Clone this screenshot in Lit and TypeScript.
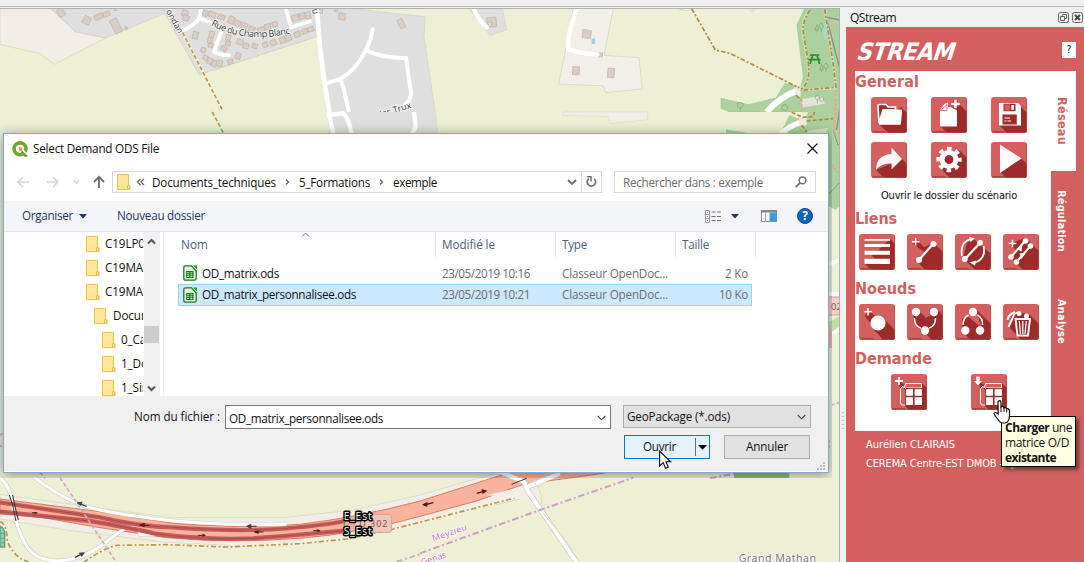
import { LitElement, html, svg, css } from "lit";
import { customElement, property } from "lit/decorators.js";

/** Text that spreads its letter spacing so that it spans `w` pixels. */
@customElement("fit-text")
class FitText extends LitElement {
  @property({ type: Number }) w = 0;
  static styles = css`
    :host { display: inline-block; white-space: pre; flex: none; }
    span { display: inline-block; white-space: pre; }
  `;
  render() {
    return html`<span><slot></slot></span>`;
  }
  firstUpdated() {
    const span = this.renderRoot.querySelector("span") as HTMLElement;
    const box = span.getBoundingClientRect();
    const n = (this.textContent || "").length;
    if (this.w && n) span.style.letterSpacing = (this.w - Math.max(box.width, box.height)) / n + "px";
  }
}

const RED = "#d35f5f";
const DARK = "#9d2b2b";

const plus = (x: number, y: number, r: number, w: number) =>
  svg`<path d="M${x - r} ${y}H${x + r}M${x} ${y - r}V${y + r}" stroke="#fff" stroke-width=${w}/>`;

const tableGlyph = svg`
  <path d="M8 6L14 12V29H31V12L36 17V36H19L11 28Z" fill=${DARK}/>
  <path d="M26 9L31 9L36 14V36H18L12 30Z" fill=${DARK}/>
  <path d="M14.500 9.500H30.500V14H13.500Z" fill=${RED} stroke="#fff" stroke-width="1"/>
  <path d="M14.500 14V31H11.500Q9.500 31 9.500 29V15L11.500 12.500Z" fill=${RED} stroke="#fff" stroke-width="1"/>
  <path d="M15 15H31V31H15Z" fill="#fff"/>
  <path d="M22.800 15V31M15 22.500H31" stroke=${DARK} stroke-width="1.600"/>
  <path d="M15 14.700H31M14.600 15V31" stroke=${DARK} stroke-width="1"/>`;

const glyphs: Record<string, unknown> = {
  folder: svg`<path d="M30 10L36 16V36H17L8 27Z" fill=${DARK}/>
    <path d="M8 26L7 9Q7 7.500 8.500 7.500H15L17 10H24.500V13H12Z" fill=${DARK} stroke="#fff" stroke-width="1.600"/>
    <path d="M12.300 12.500H31.200L30 26.500Q29.900 27.700 28.500 27.700H8.500Q7.600 27.700 7.900 26.500Z" fill="#fff"/>`,
  newdoc: svg`<path d="M27 6L36 15V36H16L9 29Z" fill=${DARK}/><path d="M9 14V29.500H26V13.500L20 10H17V5.500Q12 6 9 14Z" fill="#fff"/>
    <path d="M9.500 13.500L16 7.500V13.500Z" fill="#fff" stroke=${RED} stroke-width=".8"/><path d="M24.500 3V12M20 7.500H29" stroke=${DARK} stroke-width="4.500" opacity=".6"/>${plus(24.5, 7, 4.3, 2.6)}`,
  save: svg`<path d="M29 9L36 16V36H16L8 28Z" fill=${DARK}/><path d="M8 6H27L30 9V28.500H8Z" fill="#fff"/>
    <path d="M12.500 6.700H24.500V14.200H12.500Z" fill=${DARK}/><path d="M13.500 7.500H19V13.500H13.500Z" fill=${RED}/><path d="M20.300 8H23V12.800H20.300Z" fill="#fff"/>
    <path d="M11.500 17.500H25.800V27.500H11.500Z" fill=${DARK}/><path d="M13.500 21H19M13.500 24H15.500M16.500 24H20" stroke="#fff" stroke-width="1"/>`,
  share: svg`<path d="M31 17L36 22V36H13L5 28Z" fill=${DARK}/><path d="M20.500 5.500L31 17L20.500 27.500V21.500Q10 20.500 5 28Q5 13 20.500 12Z" fill="#f7f5f5"/>`,
  gear: svg`<path d="M28 8L36 16V36H19L8 25Z" fill=${DARK}/><circle cx="18" cy="17.500" r="10.500" fill="none" stroke="#fff" stroke-width="4.400" stroke-dasharray="4.450 3.796" stroke-dashoffset="2.225"/>
    <circle cx="18" cy="17.500" r="6.900" fill="none" stroke="#fff" stroke-width="5.200"/><circle cx="18" cy="17.500" r="4.300" fill=${DARK}/>`,
  play: svg`<path d="M30 16.500L36 22V36H15L9 30Z" fill=${DARK}/><path d="M9 2.500L30.500 16.500L9 31Z" fill="#fff"/>`,
  lines: svg`<path d="M31 5L36 10V36H12L5 29Z" fill=${DARK}/><path d="M5.500 6.700H22L25 10H5.500ZM5.500 13H18L21 16.800H5.500ZM5.500 20.800H12L16 24.700H5.500Z" fill=${RED}/>
    <path d="M5.500 5H31V6.700H5.500ZM5.500 10H31V13H5.500ZM5.500 16.800H31V20.800H5.500ZM5.500 24.700H31V30H5.500Z" fill="#fff"/>`,
  addlink: svg`<path d="M10 6L17 13L27 9L36 18V36H18L11 28L19 19L6 10Z" fill=${DARK}/><path d="M12 26L26 10" stroke="#fff" stroke-width="2.200"/>
    <circle cx="26.500" cy="10" r="3" fill="#fff"/><circle cx="12" cy="26" r="3" fill="#fff"/>${plus(8.7, 7.7, 3.8, 1.4)}`,
  reverse: svg`<path d="M19 5L36 20V36H20L8 24L12 9Z" fill=${DARK}/><path d="M10 25L25 9" stroke="#fff" stroke-width="2.200"/><circle cx="25" cy="8.800" r="2.900" fill="#fff"/><circle cx="9.800" cy="25" r="2.900" fill="#fff"/>
    <path d="M7 22Q4.500 8 16 5" stroke="#fff" stroke-width="1.800" fill="none"/><path d="M14 2.500L20 4.500L15.500 8Z" fill="#fff"/><path d="M28.500 12Q31.500 25 19 29" stroke="#fff" stroke-width="1.800" fill="none"/><path d="M21 26.500L14.500 28.500L20 31.500Z" fill="#fff"/>`,
  links: svg`<path d="M22 4L36 17V36H20L8 24L14 17L7 10Z" fill=${DARK}/><path d="M8 23L22 7M13.500 28L27.500 12" stroke="#fff" stroke-width="2"/>
    <circle cx="22.500" cy="7" r="2.800" fill="#fff"/><circle cx="27.500" cy="12" r="2.800" fill="#fff"/><circle cx="8" cy="23" r="2.800" fill="#fff"/><circle cx="13.500" cy="28" r="2.800" fill="#fff"/>
    <path d="M13.500 15L19.500 10.500L18.500 17.500ZM16.500 19.500L23 18.500L18.500 25Z" fill="#fff"/>${plus(9.5, 9.5, 3.8, 1.6)}`,
  addnode: svg`<path d="M9 5L36 32V36H24L6 12Z" fill=${DARK}/><path d="M24 14L36 26V36H25L13 24Z" fill=${DARK}/><circle cx="19" cy="19" r="7.600" fill="#fff"/>${plus(9, 7.7, 3.8, 1.6)}`,
  merge: svg`<path d="M11 6L19 14L24 11L30 5L36 11V36H25L9 20L6 11Z" fill=${DARK}/><circle cx="9" cy="8" r="4.200" fill="#fff"/><circle cx="27" cy="8" r="4.200" fill="#fff"/><circle cx="18" cy="26.500" r="4.200" fill="#fff"/>
    <path d="M7.500 14Q7.500 22.500 14 24M28.500 14Q28.500 22.500 22 24" stroke="#fff" stroke-width="1.500" fill="none"/>`,
  split: svg`<path d="M21 5L36 20V36H16L7 28V15L12 12L22 20L27 25Z" fill=${DARK}/><circle cx="18" cy="8" r="4.200" fill="#fff"/><circle cx="10.300" cy="26.500" r="4.200" fill="#fff"/><circle cx="25" cy="26.500" r="4.200" fill="#fff"/>
    <path d="M13.500 11Q8 14 8 21M22.500 11Q28 14 27.500 21" stroke="#fff" stroke-width="1.500" fill="none"/>`,
  trash: svg`<path d="M9 9L16 8L27 11L36 20V36H18L6 23Z" fill=${DARK}/><path d="M12.500 15H27L25 31.500H14.500Z" fill=${DARK} stroke="#fff" stroke-width="1.900"/><path d="M16.300 17L17.500 30M19.800 17V30M23.300 17L22 30" stroke="#fff" stroke-width="1.300"/>
    <path d="M5.500 23L11 11M4.500 16Q5 11 12 8" stroke="#fff" stroke-width="2"/><circle cx="16" cy="9.500" r="2.500" fill="#fff"/><circle cx="23.500" cy="12" r="2.500" fill="#fff"/><path d="M10 11L14 8.500" stroke="#fff" stroke-width="1.500"/>`,
  addtable: svg`${tableGlyph}${plus(8, 7, 4, 1.8)}`,
  loadtable: svg`${tableGlyph}<path d="M5.300 2.500H8.700V7H11L7 11.500L3 7H5.300Z" fill="#fff"/>`,
};

@customElement("tool-icon")
class ToolIcon extends LitElement {
  @property() name = "";
  static styles = css`
    :host { display: block; width: 36px; height: 36px; border-radius: 3px; overflow: hidden; background: #d35f5f; }
    svg { display: block; }
  `;
  render() {
    return html`<svg width="36" height="36" viewBox="0 0 36 36" fill="none">${glyphs[this.name]}<path d="M1 34.700H14" stroke="#a83a3a" stroke-width="1"/><path d="M0 35.500H36M35.500 0V36" stroke="#b84848" opacity=".6"/></svg>`;
  }
}

const b = (x: number, y: number, w: number, h: number, a = 0) =>
  svg`<rect x=${-w / 2} y=${-h / 2} width=${w} height=${h} transform="translate(${x} ${y}) rotate(${a})"/>`;

@customElement("map-view")
class MapView extends LitElement {
  static styles = css`
    :host { display: block; overflow: hidden; background: #edf0d5; }
    svg { display: block; font-family: "Noto Sans", "Open Sans", sans-serif; }
    .halo { paint-order: stroke; stroke: #fff; stroke-linejoin: round; }
  `;
  topLeft() {
    return svg`<g transform="scale(.33333)">
      <path d="M0 24H150L225 95L318 114L163 193L120 161L0 133Z" fill="#f2eee7" stroke="#dcdcc0" stroke-width="3"/>
      <path d="M153 24L225 95L318 114L495 40L487 24Z" fill="#dfdfdf" stroke="#d2d2c4" stroke-width="2"/>
      <path d="M487 24L495 40L598 224L950 110L945 24Z" fill="#dfdfdf" stroke="#d2d2c4" stroke-width="3"/>
      <path d="M945 24H1040L1276 50L1272 110L1306 336L1313 402H990L970 245Z" fill="#dfdfdf" stroke="#d2d2c4" stroke-width="2"/>
      <g fill="#d9cec6" stroke="#c3b1a5" stroke-width="2">
        ${b(183, 38, 20, 24, -30)}${b(260, 61, 22, 22, 30)}${b(296, 50, 26, 16, -25)}${b(320, 42, 20, 14, -25)}${b(348, 78, 22, 44, -27)}${b(378, 84, 7, 7)}${b(347, 28, 7, 7)}
        ${b(555, 40, 18, 18, 20)}${b(558, 54, 18, 16, 20)}${b(586, 106, 16, 22, 15)}${b(616, 40, 16, 16, 25)}${b(637, 44, 20, 16, 20)}${b(664, 51, 20, 14, 20)}
        ${b(694, 60, 16, 22, 25)}${b(712, 70, 18, 16, 20)}${b(733, 78, 18, 18, 20)}${b(755, 88, 18, 16, 20)}${b(783, 90, 20, 16, -15)}${b(803, 80, 18, 16, -15)}${b(824, 73, 16, 14, -15)}
        ${b(886, 54, 22, 18, -15)}${b(907, 48, 18, 18, -15)}${b(924, 46, 16, 20, -15)}${b(932, 88, 18, 14, -20)}${b(914, 94, 16, 14, -20)}${b(892, 103, 18, 16, -20)}${b(864, 114, 20, 18, -20)}${b(848, 120, 18, 18, -20)}${b(820, 128, 18, 16, -20)}${b(796, 134, 16, 14, -20)}
        ${b(764, 138, 16, 14, 15)}${b(738, 138, 16, 16, 15)}${b(720, 126, 18, 16, 15)}${b(685, 112, 14, 16, 15)}${b(684, 130, 14, 14, 15)}${b(671, 146, 18, 14, 30)}${b(635, 103, 14, 18, 15)}${b(630, 122, 14, 16, 15)}${b(632, 136, 14, 12, 15)}
        ${b(610, 150, 14, 14, 15)}${b(616, 173, 14, 14, 25)}${b(629, 183, 14, 18, 25)}${b(643, 191, 14, 18, 25)}${b(658, 190, 18, 18, 10)}${b(691, 185, 16, 14, -15)}${b(714, 168, 16, 18, 20)}
        ${b(1026, 49, 20, 20, 10)}${b(1204, 71, 16, 28, -28)}${b(962, 30, 12, 20)}${b(1008, 30, 8, 8)}
      </g>
      <g fill="none" stroke="#fff" stroke-width="12" stroke-linejoin="round" stroke-linecap="round">
        <path d="M603 26L598 54Q585 75 548 92M598 54L632 68" stroke-width="11"/>
        <path d="M665 92L642 155Q660 166 686 166" stroke-width="12"/>
        <path d="M857 24L873 82L930 64" stroke-width="11"/>
        <path d="M950 24L962 160L974 250L1000 410" stroke-width="14"/>
        <path d="M1118 88Q1110 130 1095 155Q1065 215 1018 238L978 250M1100 152Q1150 175 1218 174L1233 280Q1233 300 1215 314M1018 238Q1030 250 1035 285L1048 340"/>
      </g>
      <path d="M548 98L668 332" stroke="#f7f2df" stroke-width="8"/>
      <path d="M548 98L668 332" stroke="#b8954a" stroke-width="5" stroke-dasharray="12 7" fill="none"/>
      <path id="champ" d="M632 76Q740 134 880 98" fill="none"/>
      <text class="halo" font-size="28" fill="#444" stroke-width="4"><textPath href="#champ" textLength="246">Rue du Champ Blanc</textPath></text>
      <text class="halo" font-size="26" fill="#444" stroke-width="4" transform="translate(497 34) rotate(61)">ondan</text>
      <text class="halo" font-size="26" fill="#444" stroke-width="3" transform="translate(936 28) rotate(80)">u</text>
      <text class="halo" font-size="27" fill="#444" stroke-width="5" transform="translate(1142 352) rotate(-17)" textLength="98">les Trux</text>
      <path d="M0 336H978L990 402H0Z" fill="#edf0d5"/>
      <path d="M978 336H1306L1313 402H990Z" fill="#dfdfdf"/>
      <path d="M984 345L1030 340Q1045 350 1055 402M985 336L1000 402M1242 336L1247 380L1236 402" fill="none" stroke="#fff" stroke-width="13"/>
      <path d="M637 336L672 402" stroke="#b8954a" stroke-width="5" stroke-dasharray="12 7" fill="none"/>
    </g>`;
  }
  topRight() {
    return svg`<g transform="translate(420 0) scale(.33333)">
      <path d="M145 24L210 106L260 90L247 24Z" fill="#dfdfdf" stroke="#d2d2c4" stroke-width="2"/>
      <path d="M460 24H580L552 166L657 173L667 267L557 278L550 258L416 252L437 150Z" fill="#f2eee9" stroke="#dcdcc4" stroke-width="3"/>
      <g fill="#d9cec6" stroke="#c3b1a5" stroke-width="2">${b(215, 67, 28, 28, -5)}${b(500, 102, 26, 24, 8)}${b(468, 212, 20, 24, 3)}${b(573, 219, 20, 28, 5)}${b(542, 165, 12, 12)}</g>
      <path d="M203 66h12v14h-8z" fill="#e4dad2" stroke="#c3b1a5" stroke-width="2"/>
      <path d="M515 115h10v17h-10z" fill="#a5cfe0"/>
      <path d="M160 24Q175 60 200 82M470 24L446 105L444 148Q490 162 532 164" fill="none" stroke="#fff" stroke-width="13" stroke-linecap="round" stroke-linejoin="round"/>
      <path d="M770 24Q800 40 820 24M985 24L997 36L1005 24" fill="none" stroke="#d8d8d0" stroke-width="3"/><path d="M780 24Q800 34 815 24" fill="#fff"/>
      <path d="M1155 24H1260V420H1085L1150 336H930L903 325V295L985 314L1068 294L1095 250L1142 262L1150 230L1131 75Z" fill="#add19e" stroke="#9cc592" stroke-width="2"/>
      <path d="M1143 298L1208 287L1214 312L1148 322Z" fill="#e4e2dc"/>
      <path d="M1208 75L1220 62V120H1213Z" fill="#a0dccb"/>
      <path d="M1221 52L1260 60M1221 60L1258 200M1260 320L1245 420" stroke="#888f88" stroke-width="4" fill="none"/>
      <path d="M1225 67H1260" stroke="#f0b8a8" stroke-width="6" stroke-dasharray="8 6"/>
      <path d="M1040 336Q1080 290 1132 272" fill="none" stroke="#fff" stroke-width="18"/>
      <path d="M1122 262H1142V290L1128 288Z" fill="#eeebe6"/>
      <g fill="none" stroke="#e9ecd0" stroke-width="8" opacity=".5"><path d="M1168 30Q1140 70 1150 110L1165 200Q1170 250 1140 268M1214 28L1240 195L1248 265L1142 270"/></g>
      <g fill="none" stroke="#b08a3e" stroke-width="5" stroke-dasharray="14 6 6 6">
        <path d="M815 26L886 150L930 160L1138 264"/><path d="M1170 30Q1142 70 1152 110L1165 190Q1172 250 1142 268"/><path d="M1214 28L1240 195L1248 262L1142 271"/><path d="M1128 285L1145 302"/>
      </g>
      <path d="M1248 270L1247 340L1235 420M1145 300V336" stroke="#f0a08c" stroke-width="5" stroke-dasharray="6 7" fill="none"/>
      <g stroke="#22902a" stroke-width="5" fill="none"><path d="M1170 165H1198M1165 179H1202M1178 166L1170 192M1191 166L1199 192"/></g>
      <g stroke="#85ab79" stroke-width="2.500" fill="none"><path d="M952 310q10-6 18 2q0 12-9 12q-9-1-9-14M961 324v12M1094 314a9 9 0 1 0 .1 0M1185 90l6-16l6 16zM1191 90v7M1204 70a6 8 0 1 0 .1 0M1204 86v11M1199 209l6-16l6 16zM1205 209v8M1218 190a6 8 0 1 0 .1 0M1218 206v11M1192 285a6 7 0 1 0 .1 0M1205 290a6 7 0 1 0 .1 0M1192 300v10"/></g>
      <path d="M60 336H1140L1110 345L1080 402H60Z" fill="#edf0d5"/><path d="M1108 337H1165L1150 360Z" fill="#edf0d5"/>
      <path d="M430 336H683V359L572 371L564 350L430 346Z" fill="#f2eee7" stroke="#dcdcc4" stroke-width="2"/>
      <path d="M918 388L1000 402H918ZM1108 345L1145 360L1180 336H1240V402H1080Z" fill="#add19e"/>
      <path d="M1082 402Q1110 378 1140 368" stroke="#fff" stroke-width="17" fill="none"/><path d="M1138 352h22v24h-22z" fill="#eeebe6"/>
      <path d="M1160 392L1223 384V402H1162Z" fill="#dcdcd4"/>
      <path d="M1115 337L1148 352L1178 350L1184 336M1160 363L1240 356M1145 376L1160 396" stroke="#b08a3e" stroke-width="5" stroke-dasharray="12 6" fill="none"/>
      <path d="M1247 300L1245 345L1236 420" stroke="#f0a08c" stroke-width="5" stroke-dasharray="6 7" fill="none"/>
    </g>
    <g>
      <path d="M826 130H840V205L836 210L826 205Z" fill="#add19e"/><path d="M833 130L838 145L840 144M828 195L840 182" stroke="#888f88" fill="none"/>
      <path d="M834 130L837 140M832 165L839 174" stroke="#f0a08c" stroke-width="2" stroke-dasharray="2 2"/>
      <path d="M828 264L840 260M828 334L840 329M828 294H840" stroke="#fff" stroke-width="4"/>
      <path d="M829 322L840 316V326L829 334Z" fill="#c5daa5"/>
      <path d="M826 297H840V315H826Z" fill="#f4d0c8" stroke="#d9a08f"/><path d="M826 329H832V348H826Z" fill="#e9bab0"/>
      <text x="831" y="310" font-size="9.500" fill="#934e44">02</text>
      <path d="M832 405L840 402M829 440V450" stroke="#d5a3cc" stroke-width="1.500" stroke-dasharray="3 2"/>
    </g>`;
  }
  bottom() {
    return svg`<g transform="translate(0 395) scale(.33333)" fill="none">
      <path d="M0 298L300 340L520 368H850L1060 345L1260 300L1440 248L1600 200H1720L1570 310L1260 380L1050 432L850 452H700L480 440L200 405L0 372Z" fill="#f2eee7" stroke="#dcdcc8" stroke-width="3"/>
      <path d="M0 250Q30 270 38 330T75 445T180 497T330 432T420 418H480M100 245Q170 300 240 328Q300 352 500 376Q700 394 860 388" stroke="#d0d0c8" stroke-width="13"/>
      <path d="M0 312L300 350L520 385Q700 402 900 388Q1080 366 1260 318L1480 248L1640 200L1900 205L1810 235L1570 268L1430 318L1260 364Q1080 415 900 430Q700 445 500 428L300 398L130 368L0 357Z" fill="#f9b29c" stroke="#dd7a5c" stroke-width="3"/>
      <path d="M0 250Q30 270 38 330T75 445T180 497T330 432T420 418H480M100 245Q170 300 240 328Q300 352 500 376Q700 394 860 388" stroke="#fff" stroke-width="9"/>
      <path d="M0 322L300 367Q420 395 520 397Q720 412 860 400Q980 390 1035 378M0 350L270 378Q400 400 470 417Q620 436 760 430Q920 418 1035 407" stroke="#c75a5a" stroke-width="13"/>
      <path d="M0 322L300 367Q420 395 520 397Q720 412 860 400Q980 390 1035 378M0 350L270 378Q400 400 470 417Q620 436 760 430Q920 418 1035 407" stroke="#a34444" stroke-width="2"/>
      <path d="M28 300L38 330L48 378M38 300L44 330L55 375" stroke="#333" stroke-width="3"/>
      <g stroke="#444" stroke-width="4"><path d="M225 488L250 474M232 324L260 334M740 394H770"/></g>
      <g fill="#444"><path d="M255 472L236 473L245 486ZM230 322L248 320L242 333ZM738 394L754 386V402Z"/></g>
      <g stroke="#4a1f1a" stroke-width="3"><path d="M420 391H448M765 411H790M594 421H615M940 407H960M96 353H112"/></g>
      <g fill="#4a1f1a"><path d="M416 390L434 383V397ZM760 411L776 405V417ZM618 421L608 416V426ZM962 407L952 402V412ZM112 354L104 350V358Z"/></g>
      <path d="M0 380Q20 385 22 440Q35 470 60 490L90 503M250 503Q310 460 350 451L500 449L680 456L900 446L1040 432L1180 402L1580 300" stroke="#f7f2df" stroke-width="8"/>
      <path d="M0 380Q20 385 22 440Q35 470 60 490L90 503M250 503Q310 460 350 451L500 449L680 456L900 446L1040 432L1180 402L1580 300" stroke="#b8954a" stroke-width="5" stroke-dasharray="16 7 6 7"/>
      <path d="M0 393Q14 400 14 415V456H0Z" fill="#8fd0b8" stroke="#669c70" stroke-width="4"/><path d="M0 415H12M0 430H12M0 443H12" stroke="#5f9fae" stroke-width="3"/>
      <path d="M120 232L135 250M180 248L350 503M0 120L8 115M0 150L6 156" stroke="#d5a3cc" stroke-width="5" stroke-dasharray="12 7"/>
      <path d="M1190 500L1260 478" stroke="#d5a3cc" stroke-width="6" stroke-dasharray="18 8 6 8"/>
      <path d="M1033 376V400" stroke="#3bb44a" stroke-width="4"/>
      <rect x="1062" y="358" width="112" height="54" rx="6" fill="#edc6bd" stroke="#d99f92" stroke-width="3"/>
      <text x="1078" y="396" font-size="27" fill="#8f4d46" textLength="84">D 302</text>
      <g font-size="31" fill="#fff" stroke="#000" stroke-width="9" stroke-linejoin="round" paint-order="stroke" font-family="Open Sans"><text x="1031" y="374" textLength="84">E_Est</text><text x="1031" y="420" textLength="84">S_Est</text></g>
    </g>
    <g transform="translate(420 395) scale(.33333)" fill="none">
      <path d="M200 300L310 275L345 255L365 330V345L320 315Z" fill="#f2eee7"/>
      <path d="M240 230L312 260L325 290L470 503M325 275L400 240" stroke="#cfcfc8" stroke-width="17"/><path d="M240 230L312 260L325 290L470 503M325 275L420 235" stroke="#fff" stroke-width="12"/>
      <path d="M345 265Q370 290 365 350L440 440L480 503" stroke="#dcdcc8" stroke-width="3"/>
      <path d="M275 268L320 250" stroke="#333" stroke-width="3"/>
      <path d="M12 330L40 323M170 295L196 288" stroke="#4a1f1a" stroke-width="4"/><path d="M6 329L22 320V336ZM202 287L184 282L188 297Z" fill="#4a1f1a"/>
      <path d="M0 475L360 345L640 248M870 250L950 235" stroke="#cf9ccb" stroke-width="6" stroke-dasharray="20 8 6 8"/>
      <text class="halo" font-size="26" fill="#c46fbe" stroke-width="4" transform="translate(40 439) rotate(-19)" textLength="108">Meyzieu</text>
      <text class="halo" font-size="26" fill="#c46fbe" stroke-width="4" transform="translate(6 510) rotate(-17)" textLength="78">Genas</text>
      <path d="M942 230H1108V249H942Z" fill="#93b988"/>
      <text class="halo" font-size="32" fill="#777" stroke-width="5" x="956" y="500" textLength="232">Grand Mathan</text>
    </g>`;
  }
  render() {
    return html`<svg width="839" height="553" viewBox="0 9 839 553">${this.topLeft()}${this.topRight()}${this.bottom()}</svg>`;
  }
}

const folderIcon = html`<svg class="fi" width="14" height="17" viewBox="0 0 14 17"><path d="M.5.500H11.500V11.500Q13 11.500 13 13V15.500H.5Z" fill="#ffe699" stroke="#e9c24c"/><path d="M10.500 15V11.500H12.500V15Z" fill="#ffe699" stroke="#e9c24c"/></svg>`;
const odsIcon = html`<svg width="15" height="16" viewBox="0 0 15 16"><path d="M2.500.8H8.500L13.200 6V13.500Q13.200 15.200 11.500 15.200H2.500Q.8 15.200.8 13.500V2.500Q.8.800 2.500.800Z" fill="#e9ece9" stroke="#1b7d1b" stroke-width="1.300"/><path d="M10 .5H14V4.500Z" fill="#18a303"/><path d="M3.200 6H10.500V13H3.200Z" fill="#0f7a0f"/><path d="M4.200 7.200h2v1.100h-2zM7.300 7.200h2v1.100h-2zM4.200 9.200h2v1h-2zM7.300 9.200h2v1h-2zM4.200 11.100h2v1h-2zM7.300 11.100h2v1h-2z" fill="#d8f0c8"/></svg>`;
const chev = (w: number, h: number, d: string, c: string, s = 1.3) =>
  html`<svg width=${w} height=${h} viewBox="0 0 ${w} ${h}" fill="none" stroke=${c} stroke-width=${s}><path d=${d}/></svg>`;

@customElement("file-dialog")
class FileDialog extends LitElement {
  static styles = css`
    :host { display: block; box-sizing: border-box; border: 1px solid #7fa8d4; background: #fff; box-shadow: 0 2px 12px rgba(0, 0, 0, 0.42); font: 11.7px/16px "Open Sans", "Noto Sans", sans-serif; color: #111; }
    svg { display: block; flex: none; }
    .title fit-text, .bar fit-text, .lab fit-text, .combo fit-text, .btn fit-text { padding-bottom: 2px; }
    .title { height: 29px; display: flex; align-items: center; padding: 0 10px 0 8px; }
    .title fit-text { margin-left: 5px; flex: 1; }
    .nav { height: 38px; display: flex; align-items: center; padding: 0 12px 0 13px; box-sizing: border-box; }
    .arrows { width: 95px; }
    .addr, .search { height: 22px; box-sizing: border-box; border: 1px solid #d9d9d9; display: flex; align-items: center; }
    .addr { width: 490px; padding-left: 4px; }
    .crumb { flex: 1; display: flex; align-items: center; padding-left: 5px; }
    .crumb svg { margin-right: 9px; }
    .crumb svg:first-child { margin-right: 7px; }
    .crumb fit-text { margin-right: 9px; }
    .refresh { border-left: 1px solid #d9d9d9; width: 19px; height: 20px; display: grid; place-items: center; margin-left: 4px; }
    .search { width: 202px; margin-left: 12px; padding: 0 8px; color: #6d6d6d; justify-content: space-between; }
    .bar { height: 31px; box-sizing: border-box; border-bottom: 1px solid #e4e6e9; background: #f4f5f8; display: flex; align-items: center; padding: 0 15px 0 18px; color: #1e3764; }
    .org { display: flex; align-items: center; gap: 6px; margin-right: 30px; }
    .views { display: flex; align-items: center; gap: 9px; margin: 0 22px 0 auto; }
    .pane { margin-right: 20px; }
    .body { height: 164px; display: flex; }
    .tree { width: 140px; overflow: hidden; height: 164px; }
    .node { height: 24px; display: flex; align-items: center; white-space: nowrap; width: 139px; box-sizing: border-box; }
    .l0 { padding-left: 82px; }
    .l1 { padding-left: 90px; }
    .l2 { padding-left: 98px; }
    .node span { margin-left: 5px; letter-spacing: -0.1px; overflow: hidden; flex: 1 1 0; padding-bottom: 2px; }
    .scroll { width: 16px; background: #f0f0f0; display: flex; flex-direction: column; align-items: center; box-sizing: border-box; padding: 6px 1px 0 0; }
    .thumb { flex: none; width: 15px; height: 17px; background: #cdcdcd; margin: 81px 0 42px; }
    .list { flex: 1; border-left: 1px solid #f3f3f3; margin-left: 3px; padding-left: 14px; }
    .cols { display: grid; grid-template-columns: 258px 120px 120px 80px; height: 25px; color: #4c607a; }
    .cols div { border-right: 1px solid #e3e3e3; padding: 4px 0 0 6px; position: relative; }
    .cols div:first-child { padding-left: 3px; }
    .sort { position: absolute; left: 123px; top: 0; }
    .file { display: grid; grid-template-columns: 19px 240px 120px 105px 1fr; width: 574px; height: 22px; box-sizing: border-box; align-items: center; border: 1px solid transparent; color: #6d6d6d; padding: 0 3px 0 4px; }
    .file:nth-child(2) { margin-top: 5px; }
    .file.sel { background: #cce8ff; border-color: #99d1ff; }
    .file.sel svg { margin-top: -1px; }
    .file.sel fit-text { padding-bottom: 2px; }
    .name { color: #111; }
    .size { justify-self: end; }
    .foot { height: 75px; background: #f0f0f0; display: flex; flex-direction: column; padding: 9px 0 0; position: relative; box-sizing: border-box; }
    .frow { display: flex; align-items: center; height: 24px; }
    .lab { margin-left: 130px; width: 91px; }
    .inp { width: 386px; height: 24px; box-sizing: border-box; background: #fff; border: 1px solid #7a7a7a; display: flex; align-items: center; justify-content: space-between; padding: 1px 4px 0 3px; }
    .combo { width: 188px; height: 23px; box-sizing: border-box; border: 1px solid #adadad; background: #e1e1e1; margin: 0 0 1px 12px; display: flex; align-items: center; justify-content: space-between; padding: 0 4px 0 3px; }
    .btns { margin-top: 6px; justify-content: flex-end; padding-right: 18px; gap: 14px; }
    .btn { width: 86px; height: 24px; box-sizing: border-box; border: 1px solid #adadad; background: #e1e1e1; display: flex; align-items: center; justify-content: center; }
    .open { border-color: #0078d7; background: #e5f1fb; justify-content: space-between; padding: 0 2px 0 18px; }
    .drop { display: flex; align-items: center; border-left: 1px solid #6e6e6e; height: 18px; padding-left: 2px; }
    .grip { position: absolute; right: 3px; bottom: 1px; }
  `;
  render() {
    const tree: [number, string][] = [[0, "C19LP0"], [0, "C19MA"], [0, "C19MA"], [1, "Docum"], [2, "0_Cad"], [2, "1_Doc"], [2, "1_Sim"]];
    const tri = html`<svg width="8" height="5" viewBox="0 0 8 5"><path d="M0 0H8L4 4.500Z" fill="#1e3764"/></svg>`;
    const sep = chev(5, 8, "M1 1.500L3.500 4L1 6.500", "#666", 1.4);
    return html`
      <div class="title">
        <svg width="16" height="16" viewBox="0 0 16 16"><circle cx="8" cy="7.800" r="5.900" fill="none" stroke="#72a32f" stroke-width="3.600"/><path d="M7 7L10.500 7.500L15.700 13V16H12.500L8 11Z" fill="#fff"/><path d="M10 9.500L15.500 14.500V15.800H12.500L8.800 12Z" fill="#72a32f"/><path d="M6.800 6L10.500 6.800L10 10.200L7.200 9.500Z" fill="#f0913c"/></svg>
        <fit-text w="126">Select Demand ODS File</fit-text>
        <svg width="11" height="11" viewBox="0 0 11 11" stroke="#111" stroke-width="1.100"><path d="M.5.500L10.500 10.500M10.500.5L.5 10.500"/></svg>
      </div>
      <div class="nav">
        <svg class="arrows" width="95" height="16" viewBox="0 0 95 16" fill="none" stroke="#d6d6d6" stroke-width="1.600"><path d="M12 8H1M6 3L1 8L6 13M30 8H41M36 3L41 8L36 13"/><path d="M57 6.500L59.500 9L62 6.500"/><path d="M82 14V3M77 8L82 2.800L87 8" stroke="#707070" stroke-width="1.900"/></svg>
        <div class="addr">
          ${folderIcon}<div class="crumb">${chev(9, 8, "M4.500 1L1.500 4L4.500 7M8 1L5 4L8 7", "#666")}<fit-text w="124">Documents_techniques</fit-text>${sep}<fit-text w="71">5_Formations</fit-text>${sep}<fit-text w="44">exemple</fit-text></div>
          ${chev(10, 7, "M1 1L5 5L9 1", "#707070", 1.8)}
          <div class="refresh"><svg width="11" height="12" viewBox="0 0 11 12"><path d="M8.200 2.700A4.200 4.200 0 1 1 2.700 2.900" fill="none" stroke="#707070" stroke-width="1.700" transform="translate(11 0) scale(-1 1)"/><path d="M1 .8H5V5.500" fill="none" stroke="#707070" stroke-width="1.500"/></svg></div>
        </div>
        <div class="search"><fit-text w="140">Rechercher dans : exemple</fit-text><svg width="12" height="12" viewBox="0 0 12 12" fill="none" stroke="#707070"><circle cx="7.500" cy="4.300" r="3.400" stroke-width="1.500"/><path d="M5 6.800L.6 11.200" stroke-width="1.900"/></svg></div>
      </div>
      <div class="bar">
        <div class="org"><fit-text w="51">Organiser</fit-text>${tri}</div><fit-text w="88">Nouveau dossier</fit-text>
        <div class="views"><svg width="17" height="13" viewBox="0 0 17 13"><path d="M.5.500H4.500V12.500H.5Z" fill="#fff" stroke="#999"/><path d="M0 4.500H5M0 8.500H5" stroke="#999"/><path d="M6.500 2H16.500M6.500 6.500H16.500M6.500 10.500H16.500" stroke="#777" stroke-dasharray="4 1.500"/><path d="M2 2h1v1h-1z" fill="#4a7"/><path d="M2 6h1v1h-1z" fill="#27c"/><path d="M2 10h1v1h-1z" fill="#c33"/></svg>${tri}</div>
        <svg class="pane" width="16" height="12" viewBox="0 0 16 12"><path d="M.5.500H15.500V11.500H.5Z" fill="#fff" stroke="#888"/><path d="M0 0H16V2.500H0Z" fill="#888"/><path d="M4.500 2V12" stroke="#aaa"/><path d="M8.500 2.500H15V11.500H8.500Z" fill="#3f9ae8"/></svg>
        <svg width="16" height="16" viewBox="0 0 16 16"><circle cx="8" cy="8" r="7.500" fill="#0a63c4" stroke="#0a4c98"/><text x="8" y="12.300" text-anchor="middle" font-size="12" font-weight="700" fill="#fff">?</text></svg>
      </div>
      <div class="body">
        <div class="tree">${tree.map(([l, t]) => html`<div class="node l${l}">${folderIcon}<span>${t}</span></div>`)}</div>
        <div class="scroll">${chev(9, 7, "M1 5.500L4.500 2L8 5.500", "#555", 2)}<div class="thumb"></div>${chev(9, 7, "M1 1.500L4.500 5L8 1.500", "#555", 2)}</div>
        <div class="list">
          <div class="cols"><div><fit-text w="27">Nom</fit-text><span class="sort">${chev(9, 5, "M1 4.500L4.500 1L8 4.500", "#777", 1)}</span></div><div><fit-text w="53">Modifié le</fit-text></div><div><fit-text w="25">Type</fit-text></div><div><fit-text w="27">Taille</fit-text></div></div>
          <div class="file">${odsIcon}<span class="name"><fit-text w="77">OD_matrix.ods</fit-text></span><fit-text w="88">23/05/2019 10:16</fit-text><fit-text w="106">Classeur OpenDoc...</fit-text><fit-text class="size" w="23">2 Ko</fit-text></div>
          <div class="file sel">${odsIcon}<span class="name"><fit-text w="154">OD_matrix_personnalisee.ods</fit-text></span><fit-text w="88">23/05/2019 10:21</fit-text><fit-text w="106">Classeur OpenDoc...</fit-text><fit-text class="size" w="29">10 Ko</fit-text></div>
        </div>
      </div>
      <div class="foot">
        <div class="frow"><div class="lab"><fit-text w="86">Nom du fichier :</fit-text></div>
          <div class="inp"><fit-text w="154">OD_matrix_personnalisee.ods</fit-text>${chev(9, 6, "M.7 1L4.500 4.800L8.300 1", "#444", 1.1)}</div>
          <div class="combo"><fit-text w="103">GeoPackage (*.ods)</fit-text>${chev(9, 6, "M.7 1L4.500 4.800L8.300 1", "#444", 1.1)}</div></div>
        <div class="frow btns"><div class="btn open"><fit-text w="33">Ouvrir</fit-text><div class="drop"><svg width="9" height="5" viewBox="0 0 9 5"><path d="M0 0H9L4.500 4.800Z"/></svg></div></div><div class="btn"><fit-text w="42">Annuler</fit-text></div></div>
        <svg class="grip" width="8" height="8" viewBox="0 0 8 8" fill="#bdbdbd"><path d="M6 0h2v2h-2zM3 3h2v2h-2zM6 3h2v2h-2zM0 6h2v2h-2zM3 6h2v2h-2zM6 6h2v2h-2z"/></svg>
      </div>`;
  }
}

@customElement("stream-panel")
class StreamPanel extends LitElement {
  static styles = css`
    :host { display: flex; flex-direction: column; background: #f0f0f0; font: 11px/14px "DejaVu Sans Condensed", "DejaVu Sans", sans-serif; color: #111; }
    svg { display: block; }
    .head { height: 20px; display: flex; align-items: center; padding: 0 1px 0 10px; gap: 3px; }
    .head fit-text { flex: 1; font: 12px/16px "Open Sans", sans-serif; padding-top: 2px; }
    .red { flex: 1; background: #d35f5f; margin-left: 6px; padding: 0 8px 0 9px; }
    .top { height: 44px; display: flex; align-items: center; justify-content: space-between; }
    .brand { font: 700 24px/28px "DejaVu Sans Condensed", "DejaVu Sans", sans-serif; color: #fff; padding: 5px 0 0 4px; transform: skewX(-18deg); }
    .help { width: 14px; height: 16px; background: #fff; display: grid; place-items: center; font-size: 10px; margin: 2px 0 0; }
    .main { display: flex; height: 360px; }
    .page { width: 196px; background: #fff; }
    h2 { margin: 0; font: 700 16px/20px "DejaVu Sans Condensed", "DejaVu Sans", sans-serif; color: #d35f5f; height: 26px; padding-top: 1px; box-sizing: border-box; }
    .row { display: flex; height: 36px; margin-bottom: 8px; }
    .r3 { gap: 24px; padding-left: 16px; margin-bottom: 9px; }
    .r4 { gap: 12px; padding-left: 4px; }
    .r2 { gap: 44px; padding-left: 36px; }
    .cap { height: 21px; padding: 2px 0 0 26px; box-sizing: border-box; }
    .tabs { display: flex; flex-direction: column; width: 25px; color: #fff; }
    .tab { writing-mode: vertical-rl; font-weight: 700; font-size: 11px; line-height: 21px; box-sizing: border-box; width: 25px; padding-right: 4px; }
    .t1 { height: 100px; background: #fff; color: #d35f5f; font-size: 12.5px; padding: 26px 3px 0 0; }
    .t2 { height: 108px; padding-top: 19px; }
    .t3 { height: 100px; padding-top: 20px; }
    .credits { color: #fff; padding: 4px 0 0 11px; line-height: 19px; white-space: nowrap; }
    .credits fit-text { display: block; }
  `;
  render() {
    const row = (cls: string, names: string[]) => html`<div class="row ${cls}">${names.map((n) => html`<tool-icon name=${n}></tool-icon>`)}</div>`;
    return html`
      <div class="head"><fit-text w="46">QStream</fit-text>
        <svg width="11" height="11" viewBox="0 0 11 11" fill="none" stroke="#666"><rect x=".5" y=".5" width="10" height="10" rx="2"/><path d="M4.500 4.500V2.500H8.500V6.500H6.500M2.500 4.500H6.500V8.500H2.500Z"/></svg>
        <svg width="11" height="11" viewBox="0 0 11 11" fill="none" stroke="#666"><rect x=".5" y=".5" width="10" height="10" rx="2"/><path d="M3 3L8 8M8 3L3 8" stroke="#444" stroke-width="1.900"/></svg>
      </div>
      <div class="red">
        <div class="top"><div class="brand"><fit-text w="106">STREAM</fit-text></div><div class="help">?</div></div>
        <div class="main">
          <div class="page">
            <h2><fit-text w="64">General</fit-text></h2>${row("r3", ["folder", "newdoc", "save"])}${row("r3", ["share", "gear", "play"])}
            <div class="cap"><fit-text w="136">Ouvrir le dossier du scénario</fit-text></div>
            <h2><fit-text w="42">Liens</fit-text></h2>${row("r4", ["lines", "addlink", "reverse", "links"])}
            <h2><fit-text w="61">Noeuds</fit-text></h2>${row("r4", ["addnode", "merge", "split", "trash"])}
            <h2><fit-text w="77">Demande</fit-text></h2>${row("r2", ["addtable", "loadtable"])}
          </div>
          <div class="tabs"><div class="tab t1"><fit-text w="48">Réseau</fit-text></div><div class="tab t2"><fit-text w="62">Régulation</fit-text></div><div class="tab t3"><fit-text w="45">Analyse</fit-text></div></div>
        </div>
        <div class="credits"><fit-text w="89">Aurélien CLAIRAIS</fit-text><fit-text w="162">CEREMA Centre-EST DMOB - Lyon</fit-text></div>
      </div>`;
  }
}

@customElement("app-root")
class AppRoot extends LitElement {
  static styles = css`
    :host { display: block; position: relative; width: 1084px; height: 562px; overflow: hidden; background: #f0f0f0; }
    .strip { height: 6px; border-bottom: 1px solid #b4b8b8; }
    .cols { display: flex; height: 555px; }
    .map { width: 839px; border-top: 1px solid #adb1b1; border-right: 1px solid #b0b0b0; margin-top: 1px; height: 553px; }
    stream-panel { width: 244px; }
    .layer { position: absolute; left: 0; top: 112px; width: 832px; height: 366px; overflow: hidden; }
    file-dialog { width: 826px; height: 340px; margin: 21px 0 0 3px; }
    .handle { position: absolute; left: 842px; top: 412px; width: 2px; height: 17px; background: repeating-linear-gradient(#bbb 0 1px, transparent 1px 4px); }
    .tip { position: absolute; left: 1001px; top: 416px; width: 75px; height: 51px; box-sizing: border-box; background: #ffffe1; border: 1px solid #000; box-shadow: 3px 3px 3px rgba(0, 0, 0, 0.4); font: 12px/15px "Open Sans", sans-serif; color: #111; padding: 3px 0 0 3px; white-space: nowrap; }
    .tip div { display: flex; }
    .arrow { position: absolute; left: 659px; top: 450px; }
    .hand { position: absolute; left: 993px; top: 400px; }
  `;
  render() {
    return html`
      <div class="strip"></div>
      <div class="cols"><map-view class="map"></map-view><stream-panel></stream-panel></div>
      <div class="layer"><file-dialog></file-dialog></div>
      <div class="handle"></div>
      <div class="tip"><div><b><fit-text w="47">Charger </fit-text></b><fit-text w="20">une</fit-text></div><div><fit-text w="64">matrice O/D</fit-text></div><div><b><fit-text w="51">existante</fit-text></b></div></div>
      <svg class="hand" width="19" height="24" viewBox="0 0 19 24"><path d="M5 2.500Q5 .7 6.500.7Q8 .7 8 2.500V7Q9.800 5.500 10.800 8Q12.500 6.500 13.500 9Q15.500 8 16.500 10.500V16Q16.500 19 14.500 22L12 23H9L7 22L2 15.500L1 13.500Q2.500 11.500 5.200 14Z" fill="#fff" stroke="#111" stroke-width="1.200"/><path d="M8 7V12M11 8V12M13.700 9.500V12.500" stroke="#111"/></svg>
      <svg class="arrow" width="13" height="20" viewBox="0 0 13 20"><path d="M.6 1V16L4.200 12.700L6.600 18.300L9.300 17.200L7 11.800H11.600Z" fill="#fff" stroke="#111" stroke-width="1.100"/></svg>`;
  }
}
